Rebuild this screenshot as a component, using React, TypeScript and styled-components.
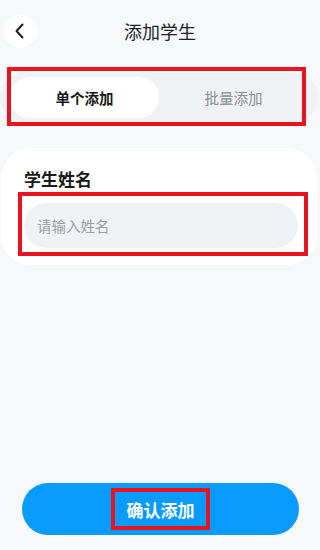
import React from "react";
import styled, { createGlobalStyle } from "styled-components";

const GlobalStyle = createGlobalStyle`
  html, body { margin: 0; padding: 0; background: #f6f8fa; }
  body { font-family: "Noto Sans CJK SC", "Noto Sans", sans-serif; }
  * { box-sizing: border-box; }
`;

const Page = styled.div`
  width: 320px;
  height: 550px;
  display: flex;
  flex-direction: column;
  background: #f6f8fa;
  overflow: hidden;
`;

const Header = styled.div`
  display: grid;
  grid-template-columns: 1fr auto 1fr;
  align-items: center;
  padding: 13px 0 0 3px;
  height: 48px;
`;

const BackButton = styled.button`
  width: 34px;
  height: 34px;
  border-radius: 50%;
  border: none;
  background: #ffffff;
  display: flex;
  align-items: center;
  justify-content: center;
  padding: 0;
  box-shadow: 0 0 2px rgba(0, 0, 0, 0.04);
`;

const Title = styled.div`
  font-size: 18px;
  color: #1f2329;
  line-height: 24px;
  margin-left: -3px;
`;

const Segmented = styled.div`
  position: relative;
  margin: 25px 2px 0 0;
  height: 49px;
  border-radius: 25px;
  background: #eff2f4;
  display: grid;
  grid-template-columns: 1fr 1fr;
  padding: 4px 10px 4px 10px;
`;

const Tab = styled.div<{ $active?: boolean }>`
  display: flex;
  align-items: center;
  justify-content: center;
  border-radius: 20px;
  background: ${(p) => (p.$active ? "#ffffff" : "transparent")};
  color: ${(p) => (p.$active ? "#1a1a1a" : "#8a8d91")};
  font-weight: ${(p) => (p.$active ? 700 : 400)};
  font-size: 14.5px;
`;

const Mark = styled.div<{ $l: number; $t: number; $w: number; $h: number }>`
  position: absolute;
  left: ${(p) => p.$l}px;
  top: ${(p) => p.$t}px;
  width: ${(p) => p.$w}px;
  height: ${(p) => p.$h}px;
  border: 4px solid #e8131d;
  pointer-events: none;
`;

const Card = styled.div`
  margin: 26px 3px 0 1px;
  height: 117px;
  border-radius: 30px;
  background: #ffffff;
  padding: 20px 19px 0 23px;
  display: flex;
  flex-direction: column;
`;

const Label = styled.div`
  font-size: 17px;
  font-weight: 700;
  color: #1a1a1a;
  line-height: 22px;
`;

const InputWrap = styled.div`
  position: relative;
  margin-top: 13px;
`;

const Input = styled.div`
  height: 45px;
  border-radius: 23px;
  background: #eff2f4;
  display: flex;
  align-items: center;
  padding-left: 13px;
  font-size: 14.5px;
  color: #9a9ea3;
`;

const ConfirmButton = styled.button`
  margin: auto 21px 15px 22px;
  height: 52px;
  border-radius: 26px;
  border: none;
  background: #0a9bfe;
  display: flex;
  align-items: center;
  justify-content: center;
  padding: 0;
`;

const ConfirmText = styled.span`
  display: inline-flex;
  align-items: center;
  justify-content: center;
  width: 99px;
  height: 42px;
  border: 4px solid #e8131d;
  color: #ffffff;
  font-weight: 700;
  font-size: 17px;
  font-family: "Noto Sans CJK SC", sans-serif;
`;

export default function App() {
  return (
    <>
      <GlobalStyle />
      <Page>
        <Header>
          <BackButton aria-label="返回">
            <svg width="12" height="16" viewBox="0 0 12 16" fill="none">
              <path d="M8.5 1.5 L2.5 8 L8.5 14.5" stroke="#1b2230" strokeWidth="2" strokeLinecap="round" strokeLinejoin="round" />
            </svg>
          </BackButton>
          <Title>添加学生</Title>
          <div />
        </Header>
        <Segmented>
          <Tab $active>单个添加</Tab>
          <Tab>批量添加</Tab>
          <Mark $l={7} $t={-6} $w={299} $h={59} />
        </Segmented>
        <Card>
          <Label>学生姓名</Label>
          <InputWrap>
            <Input>请输入姓名</Input>
            <Mark $l={-6} $t={-11} $w={290} $h={64} />
          </InputWrap>
        </Card>
        <ConfirmButton>
          <ConfirmText>确认添加</ConfirmText>
        </ConfirmButton>
      </Page>
    </>
  );
}
